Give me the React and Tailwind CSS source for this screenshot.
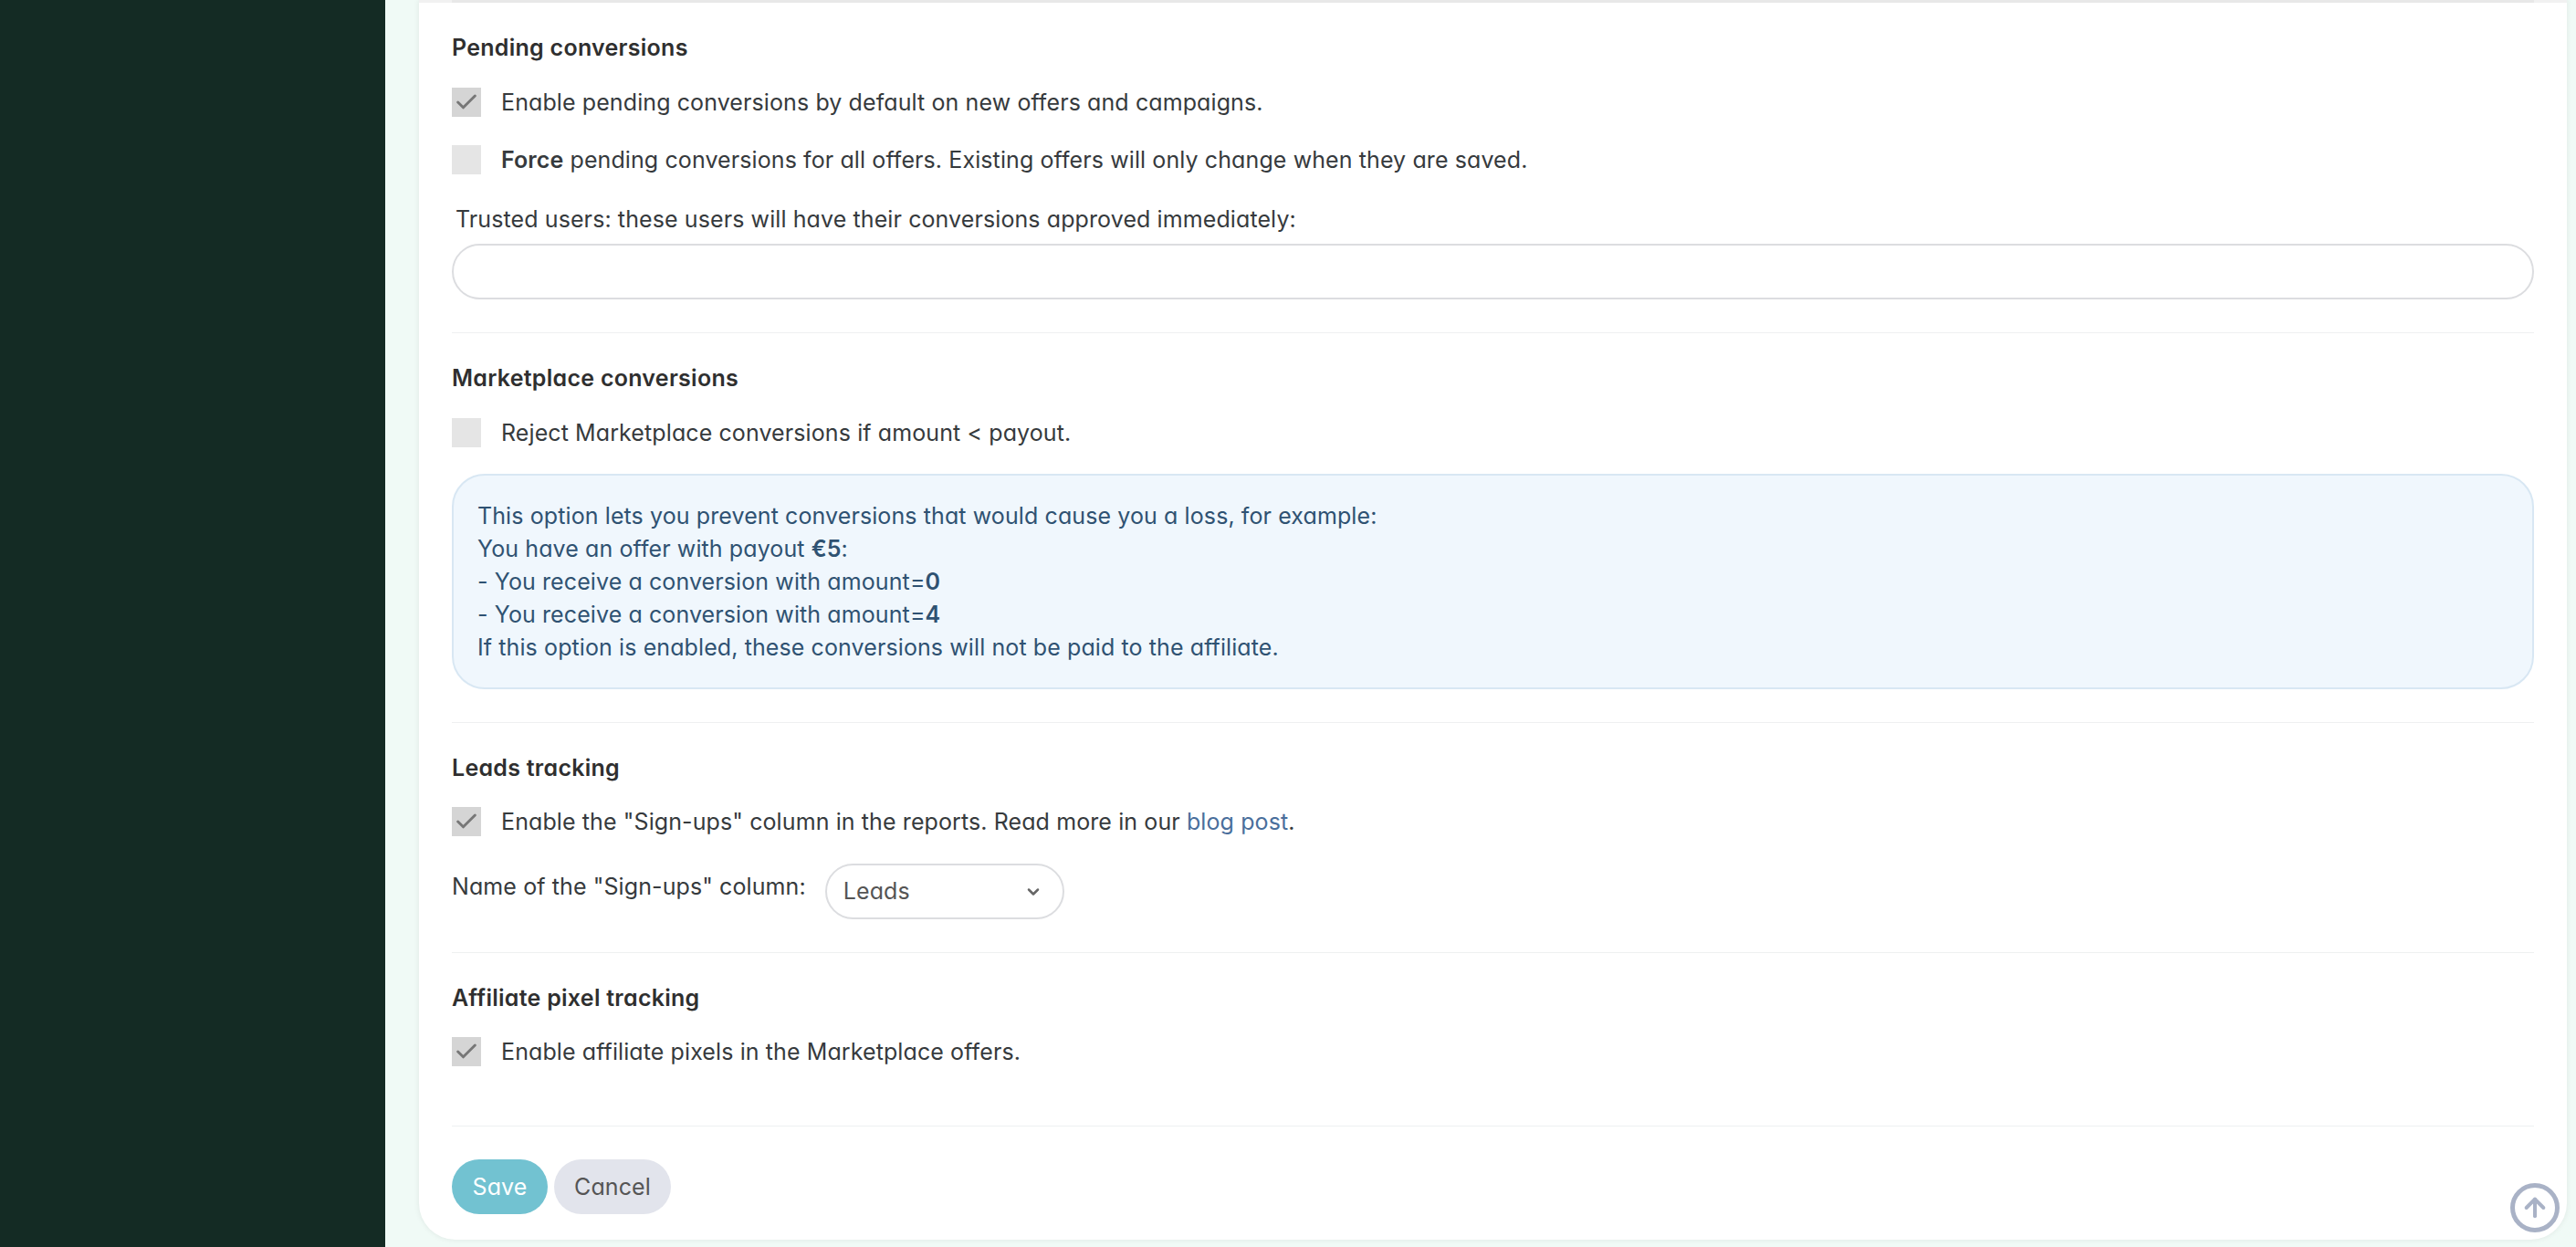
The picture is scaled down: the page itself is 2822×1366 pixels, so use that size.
import React from "react";
import { Check, ChevronDown, ArrowUp } from "lucide-react";

const Heading = ({ className = "", children }) => (
  <h3 className={`h-[36px] pt-[2px] flex items-center text-[25px] font-semibold text-[#2f2f2f] tracking-[0.27px] ${className}`}>{children}</h3>
);

const CheckRow = ({ checked, className = "", children }) => (
  <label className={`flex items-center h-[32px] ${className}`}>
    <span className={`w-[32px] h-[32px] flex items-center justify-center ${checked ? "bg-[#d5d5d5]" : "bg-[#e5e5e5]"}`}>
      {checked && <Check size={28} strokeWidth={2.5} className="text-[#777777]" />}
    </span>
    <span className="ml-[22px] pt-[2px]">{children}</span>
  </label>
);

const Divider = ({ className = "" }) => <hr className={`border-0 h-px bg-[#eef0f1] ${className}`} />;

const App = () => {
  return (
    <div className="h-[1366px] flex overflow-hidden bg-[#f0faf6] text-[25px] text-[#363a3d] font-['Inter','Liberation_Sans',sans-serif] [font-feature-settings:'cv11'] tracking-[0.1px]">
      <aside className="w-[422px] bg-[#142b24] shrink-0" />
      <main className="relative ml-[37px] w-[2353px] h-[1358px] bg-white rounded-b-[40px] shadow-[0_0_6px_rgba(0,0,0,0.08)] px-[36px]">
        <div className="-mx-[36px] h-[3px] px-[36px] bg-[#f1f1f1]">
          <div className="h-full bg-[#e8e8e8]" />
        </div>
        <Heading className="mt-[31px]">Pending conversions</Heading>
        <CheckRow checked className="mt-[26px]">Enable pending conversions by default on new offers and campaigns.</CheckRow>
        <CheckRow className="mt-[31px]"><b className="font-semibold">Force</b> pending conversions for all offers. Existing offers will only change when they are saved.</CheckRow>
        <p className="mt-[31px] h-[36px] pl-[4px] leading-[36px]">Trusted users: these users will have their conversions approved immediately:</p>
        <input className="mt-[9px] block w-full h-[61px] rounded-full border-2 border-[#dcdde0] bg-white" />
        <Divider className="mt-[36px]" />

        <Heading className="mt-[31px]">Marketplace conversions</Heading>
        <CheckRow className="mt-[26px]">Reject Marketplace conversions if amount &lt; payout.</CheckRow>
        <div className="mt-[29px] h-[236px] rounded-[36px] border-2 border-[#d8e7f3] bg-[#f0f7fd] px-[26px] py-[26px] leading-[36px] text-[#2f5272]">
          <p>This option lets you prevent conversions that would cause you a loss, for example:</p>
          <p>You have an offer with payout <b className="font-semibold">€5</b>:</p>
          <p>- You receive a conversion with amount=<b className="font-semibold">0</b></p>
          <p>- You receive a conversion with amount=<b className="font-semibold">4</b></p>
          <p>If this option is enabled, these conversions will not be paid to the affiliate.</p>
        </div>
        <Divider className="mt-[36px]" />

        <Heading className="mt-[31px]">Leads tracking</Heading>
        <CheckRow checked className="mt-[25px]">Enable the "Sign-ups" column in the reports. Read more in our <a className="text-[#4a6f9c]">blog post</a>.</CheckRow>
        <div className="mt-[30px] flex items-start h-[61px]">
          <span className="h-[50px] leading-[50px]">Name of the "Sign-ups" column:</span>
          <div className="ml-[21px] w-[262px] h-[61px] rounded-full border-2 border-[#dcdde0] flex items-center justify-between pl-[18px] pr-[22px] text-[#555555]">
            Leads
            <ChevronDown size={20} strokeWidth={3} className="text-[#666666]" />
          </div>
        </div>
        <Divider className="mt-[36px]" />

        <Heading className="mt-[31px]">Affiliate pixel tracking</Heading>
        <CheckRow checked className="mt-[25px]">Enable affiliate pixels in the Marketplace offers.</CheckRow>
        <Divider className="mt-[65px]" />

        <div className="mt-[36px] flex gap-[7px]">
          <button className="w-[105px] h-[60px] pt-[1px] rounded-full bg-[#72c2d1] text-white">Save</button>
          <button className="w-[128px] h-[60px] pt-[1px] rounded-full bg-[#e2e4ec] text-[#555555]">Cancel</button>
        </div>

        <button className="absolute right-[8px] bottom-[8px] w-[54px] h-[54px] rounded-full border-[5px] border-[#a9b2c6] bg-white flex items-center justify-center">
          <ArrowUp size={32} strokeWidth={3} className="text-[#a9b2c6]" />
        </button>
      </main>
    </div>
  );
};

export default App;
